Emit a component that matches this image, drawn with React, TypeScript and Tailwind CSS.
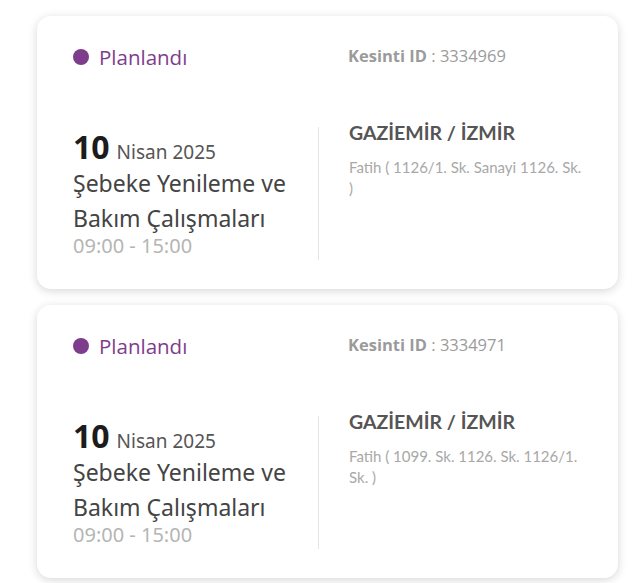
import React from "react";

type Outage = { id: string; street: string };

const items: Outage[] = [
  { id: "3334969", street: "Fatih ( 1126/1. Sk. Sanayi 1126. Sk. )" },
  { id: "3334971", street: "Fatih ( 1099. Sk. 1126. Sk. 1126/1. Sk. )" },
];

function Card({ o }: { o: Outage }) {
  return (
    <div className="bg-white rounded-[14px] shadow-[0_2px_10px_rgba(0,0,0,0.16)] pl-[36px] pr-[30px] pt-[29px] pb-[29px]">
      <div className="grid grid-cols-[245px_1fr]">
        <div className="flex items-center gap-[10px] h-[24px] font-['Open_Sans',sans-serif]">
          <span className="w-[16px] h-[16px] rounded-full bg-[#7e3d8c]" />
          <span className="text-[20.5px] text-[#7e3d8c]">Planlandı</span>
        </div>
        <div className="pl-[30px] h-[24px] flex items-center font-['Open_Sans',sans-serif] text-[16.5px] text-[#9b9b9b] -mt-[1px]">
          <span className="font-bold">Kesinti ID</span>
          <span>&nbsp;: {o.id}</span>
        </div>
      </div>
      <div className="grid grid-cols-[245px_1fr] mt-[58px]">
        <div className="font-['Noto_Sans',sans-serif] pb-[4px]">
          <div className="flex items-baseline gap-[7px] leading-none pt-[4px]">
            <span className="text-[32px] font-bold text-[#1c1c1c]">10</span>
            <span className="text-[19px] text-[#555]">Nisan 2025</span>
          </div>
          <div className="text-[23px] text-[#444] leading-[35px] mt-[3px]">Şebeke Yenileme ve Bakım Çalışmaları</div>
          <div className="text-[20px] text-[#b5b5b5] leading-[20px]">09:00 - 15:00</div>
        </div>
        <div className="border-l border-[#e4e4e4] pl-[30px] font-['Lato',sans-serif]">
          <div className="text-[19.5px] font-bold text-[#555] leading-[24px] -mt-[6px]">GAZİEMİR / İZMİR</div>
          <div className="text-[15px] text-[#a8a8a8] leading-[21px] mt-[12px] max-w-[236px]">{o.street}</div>
        </div>
      </div>
    </div>
  );
}

export default function App() {
  return (
    <div className="min-h-[583px] bg-white pt-[16px] pl-[37px] w-[640px]">
      <div className="w-[581px] flex flex-col gap-[16px]">
        {items.map((o) => (
          <Card key={o.id} o={o} />
        ))}
      </div>
    </div>
  );
}
